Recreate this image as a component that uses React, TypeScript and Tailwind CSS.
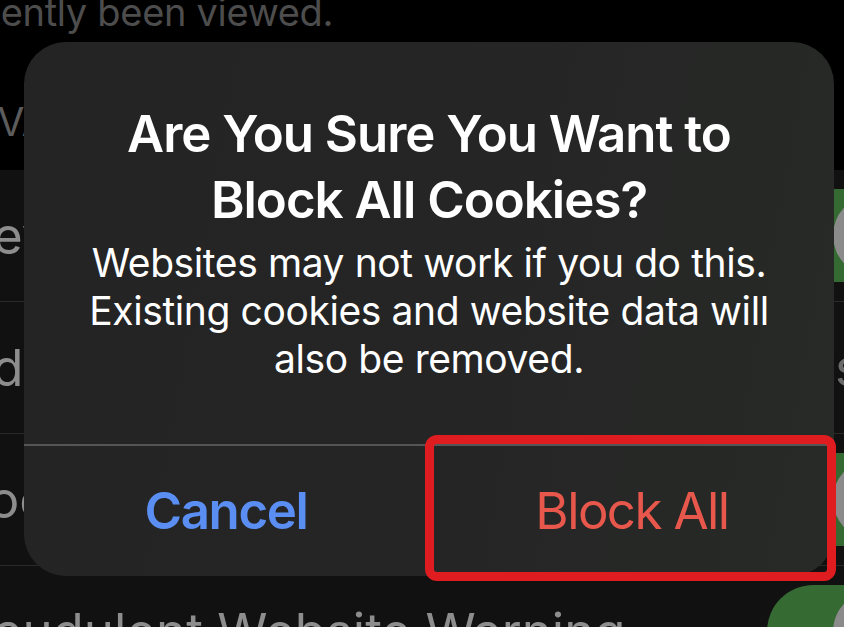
import React from 'react'

/**
 * Safari privacy settings, dimmed behind the "Block All Cookies" alert
 */

const font = { fontFamily: 'Inter, "Noto Sans", sans-serif' }

function Toggle({ className = '' }: { className?: string }) {
  return (
    <div className={`flex h-[93px] w-[153px] shrink-0 items-center justify-end rounded-full bg-[#356a33] px-[6px] ${className}`}>
      <div className="h-[81px] w-[81px] rounded-full bg-[#8b8b8b]" />
    </div>
  )
}

function SettingsRow({ label, shift, children }: { label: string; shift: string; children?: React.ReactNode }) {
  return (
    <div className="flex h-[132px] shrink-0 items-center justify-between overflow-hidden border-b border-[#2a2a2a]">
      <span className={`whitespace-nowrap text-[51px] leading-none text-[#8d8d8d] ${shift}`}>{label}</span>
      {children}
    </div>
  )
}

export default function App() {
  return (
    <div className="relative h-[627px] w-[844px] overflow-hidden bg-black" style={font}>
      {/* Background list */}
      <div className="flex flex-col">
        <div className="flex h-[170px] flex-col overflow-hidden bg-black">
          <p className="-mt-[12px] ml-[-56px] whitespace-nowrap text-[38px] leading-[48px] tracking-[-0.3px] text-[#4d4d4d]">
            recently been viewed.
          </p>
          <p className="mt-[62px] ml-[-63px] whitespace-nowrap text-[39px] leading-[48px] text-[#5c5c5c]">
            PRIVACY &amp; SECURITY
          </p>
        </div>
        <div className="flex flex-col bg-[#111111]">
          <SettingsRow label="Prevent Cross-Site Tracking" shift="ml-[-58px]">
            <Toggle className="mr-[-76px]" />
          </SettingsRow>
          <SettingsRow label="Hide IP Address" shift="ml-[-58px]">
            <span className="mr-[-18px] whitespace-nowrap text-[51px] leading-none text-[#6a6a6a]">From Trackers</span>
          </SettingsRow>
          <SettingsRow label="Block All Cookies" shift="ml-[-57px]">
            <Toggle className="mr-[-76px]" />
          </SettingsRow>
          <SettingsRow label="Fraudulent Website Warning" shift="ml-[-54px]">
            <Toggle className="mr-[-76px]" />
          </SettingsRow>
        </div>
      </div>

      {/* Alert */}
      <div className="absolute left-[24px] top-[42px] flex h-[534px] w-[810px] flex-col overflow-hidden rounded-[42px] bg-[linear-gradient(100deg,#242424_0%,#252525_55%,#272a27_100%)]">
        <div className="flex flex-1 flex-col items-center pt-[59px] text-center">
          <h2 className="text-[51px] font-semibold leading-[66px] tracking-[-1px] text-white">
            Are You Sure You Want to
            <br />
            Block All Cookies?
          </h2>
          <p className="mt-[6px] text-[39px] leading-[48px] tracking-[-0.4px] text-white">
            Websites may not work if you do this.
            <br />
            Existing cookies and website data will
            <br />
            also be removed.
          </p>
        </div>
        <div className="flex h-[132px] shrink-0 border-t-2 border-[#555555]">
          <button className="flex flex-1 items-center justify-center text-[51px] font-semibold tracking-[-1.4px] text-[#5a8ef2]">
            Cancel
          </button>
          <div className="w-[2px] bg-[#555555]" />
          <button className="flex flex-1 items-center justify-center text-[51px] tracking-[-1.6px] text-[#e8574b]">
            Block All
          </button>
        </div>
      </div>

      {/* Highlight box */}
      <div className="absolute left-[425px] top-[435px] h-[146px] w-[411px] rounded-[12px] border-[9px] border-[#df1c1f]" />
    </div>
  )
}
